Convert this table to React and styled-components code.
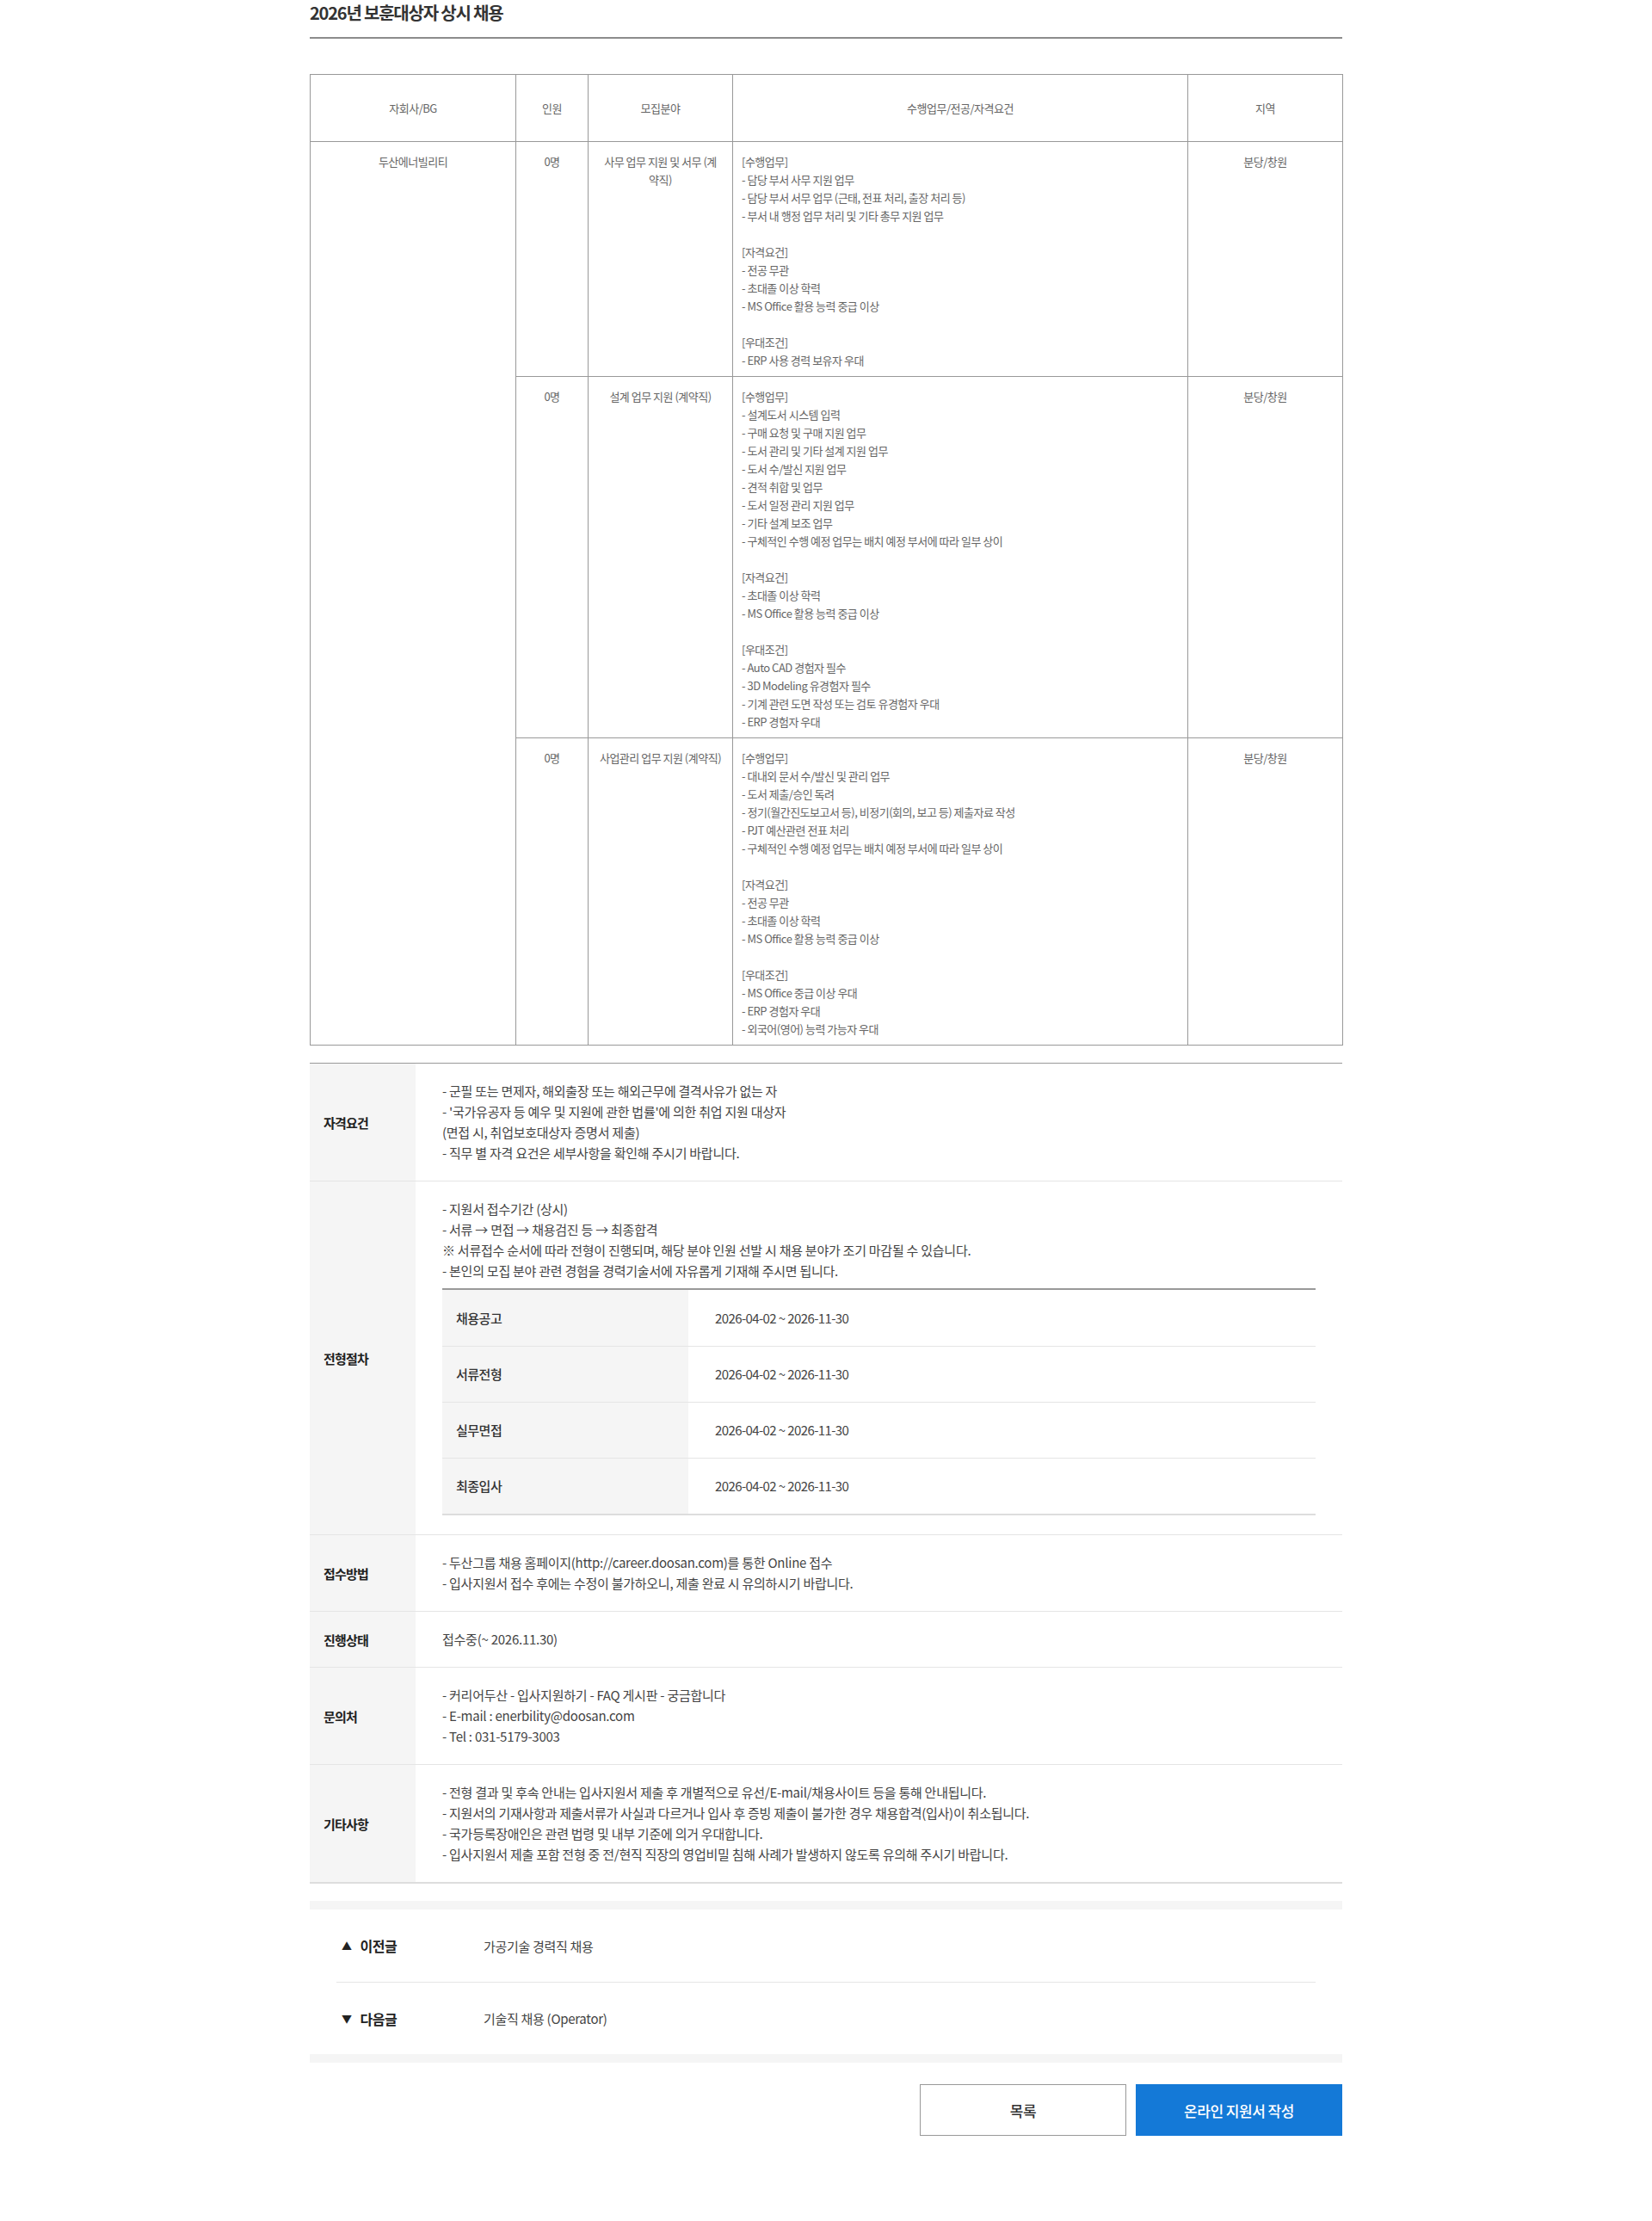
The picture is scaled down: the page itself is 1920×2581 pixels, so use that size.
import React from "react";
import styled, { createGlobalStyle } from "styled-components";

const GlobalStyle = createGlobalStyle`
  body {
    margin: 0;
    background: #fff;
    font-family: "Noto Sans CJK KR", "Noto Sans", sans-serif;
    color: #333;
  }
  * { box-sizing: border-box; }
`;

const Page = styled.div`
  width: 1200px;
  margin: 0 auto;
  padding-bottom: 100px;
`;

const Title = styled.h2`
  margin: 0;
  padding-bottom: 13px;
  font-size: 20px;
  line-height: 30px;
  font-weight: 700;
  letter-spacing: -1.2px;
  color: #333;
  border-bottom: 2px solid #8c8c8c;
`;

const JobTable = styled.table`
  width: 100%;
  margin-top: 41px;
  border-collapse: collapse;
  table-layout: fixed;
  font-size: 13px;
  line-height: 21px;
  letter-spacing: -0.5px;
  color: #666;
  th, td {
    border: 1px solid #999;
  }
`;

const Th = styled.th`
  height: 78px;
  font-weight: 400;
  text-align: center;
  vertical-align: middle;
`;

const Td = styled.td`
  padding: 12px 10px 8px;
  vertical-align: top;
  text-align: ${props => (props.$left ? "left" : "center")};
  white-space: pre-line;
`;

const InfoList = styled.dl`
  margin: 20px 0 0;
  border-top: 1px solid #999;
  border-bottom: 2px solid #ddd;
`;

const InfoRow = styled.div`
  display: flex;
  & + & {
    border-top: 1px solid #e5e5e5;
  }
`;

const InfoLabel = styled.dt`
  width: 123px;
  flex-shrink: 0;
  display: flex;
  align-items: center;
  padding-left: 16px;
  background: #f5f5f5;
  font-size: 15px;
  font-weight: 700;
  letter-spacing: -0.8px;
  color: #222;
`;

const InfoBody = styled.dd`
  flex: 1;
  margin: 0;
  padding: 20px 31px;
  font-size: 15px;
  line-height: 24px;
  letter-spacing: -0.25px;
  color: #444;
  white-space: pre-line;
`;

const StepTable = styled.div`
  margin: 8px 0 2px;
  border-top: 2px solid #999;
  border-bottom: 2px solid #ddd;
`;

const StepRow = styled.div`
  display: grid;
  grid-template-columns: 286px 1fr;
  height: 65px;
  & + & {
    border-top: 1px solid #e5e5e5;
  }
`;

const StepLabel = styled.div`
  display: flex;
  align-items: center;
  padding-left: 16px;
  background: #f5f5f5;
  font-size: 15px;
  font-weight: 500;
  letter-spacing: -0.5px;
  color: #333;
`;

const StepDate = styled.div`
  display: flex;
  align-items: center;
  padding-left: 31px;
  font-size: 15px;
  letter-spacing: -0.6px;
  color: #444;
`;

const Nav = styled.div`
  margin-top: 20px;
  padding: 0 31px;
  border-top: 10px solid #f5f5f5;
  border-bottom: 10px solid #f5f5f5;
`;

const NavRow = styled.div`
  display: flex;
  align-items: center;
  height: 84px;
  padding-left: 6px;
  & + & {
    border-top: 1px solid #e5e5e5;
  }
`;

const NavLabel = styled.span`
  display: flex;
  align-items: center;
  gap: 10px;
  width: 165px;
  font-size: 16px;
  font-weight: 700;
  letter-spacing: -0.5px;
  color: #222;
`;

const Arrow = styled.span`
  font-size: 12px;
  color: #222;
`;

const NavTitle = styled.span`
  font-size: 15px;
  letter-spacing: -0.3px;
  color: #444;
`;

const Buttons = styled.div`
  display: flex;
  justify-content: flex-end;
  gap: 11px;
  margin-top: 25px;
`;

const Button = styled.button`
  width: 240px;
  height: 60px;
  border: 1px solid ${props => (props.$primary ? "#1479d7" : "#999")};
  background: ${props => (props.$primary ? "#1479d7" : "#fff")};
  color: ${props => (props.$primary ? "#fff" : "#333")};
  font-family: inherit;
  font-size: 17px;
  font-weight: 500;
  letter-spacing: -0.5px;
  cursor: pointer;
`;

const jobs = [
  {
    count: "0명",
    field: "사무 업무 지원 및 서무 (계\n약직)",
    detail: `[수행업무]
- 담당 부서 사무 지원 업무
- 담당 부서 서무 업무 (근태, 전표 처리, 출장 처리 등)
- 부서 내 행정 업무 처리 및 기타 총무 지원 업무

[자격요건]
- 전공 무관
- 초대졸 이상 학력
- MS Office 활용 능력 중급 이상

[우대조건]
- ERP 사용 경력 보유자 우대`,
    area: "분당/창원"
  },
  {
    count: "0명",
    field: "설계 업무 지원 (계약직)",
    detail: `[수행업무]
- 설계도서 시스템 입력
- 구매 요청 및 구매 지원 업무
- 도서 관리 및 기타 설계 지원 업무
- 도서 수/발신 지원 업무
- 견적 취합 및 업무
- 도서 일정 관리 지원 업무
- 기타 설계 보조 업무
- 구체적인 수행 예정 업무는 배치 예정 부서에 따라 일부 상이

[자격요건]
- 초대졸 이상 학력
- MS Office 활용 능력 중급 이상

[우대조건]
- Auto CAD 경험자 필수
- 3D Modeling 유경험자 필수
- 기계 관련 도면 작성 또는 검토 유경험자 우대
- ERP 경험자 우대`,
    area: "분당/창원"
  },
  {
    count: "0명",
    field: "사업관리 업무 지원 (계약직)",
    detail: `[수행업무]
- 대내외 문서 수/발신 및 관리 업무
- 도서 제출/승인 독려
- 정기(월간진도보고서 등), 비정기(회의, 보고 등) 제출자료 작성
- PJT 예산관련 전표 처리
- 구체적인 수행 예정 업무는 배치 예정 부서에 따라 일부 상이

[자격요건]
- 전공 무관
- 초대졸 이상 학력
- MS Office 활용 능력 중급 이상

[우대조건]
- MS Office 중급 이상 우대
- ERP 경험자 우대
- 외국어(영어) 능력 가능자 우대`,
    area: "분당/창원"
  }
];

const steps = ["채용공고", "서류전형", "실무면접", "최종입사"];

export default function App() {
  return (
    <Page>
      <GlobalStyle />
      <Title>2026년 보훈대상자 상시 채용</Title>

      <JobTable>
        <colgroup>
          <col style={{ width: "239px" }} />
          <col style={{ width: "84px" }} />
          <col style={{ width: "168px" }} />
          <col style={{ width: "529px" }} />
          <col style={{ width: "180px" }} />
        </colgroup>
        <thead>
          <tr>
            <Th>자회사/BG</Th>
            <Th>인원</Th>
            <Th>모집분야</Th>
            <Th>수행업무/전공/자격요건</Th>
            <Th>지역</Th>
          </tr>
        </thead>
        <tbody>
          {jobs.map((job, i) => (
            <tr key={i}>
              {i === 0 && <Td rowSpan={jobs.length}>두산에너빌리티</Td>}
              <Td>{job.count}</Td>
              <Td>{job.field}</Td>
              <Td $left>{job.detail}</Td>
              <Td>{job.area}</Td>
            </tr>
          ))}
        </tbody>
      </JobTable>

      <InfoList>
        <InfoRow>
          <InfoLabel>자격요건</InfoLabel>
          <InfoBody>{`- 군필 또는 면제자, 해외출장 또는 해외근무에 결격사유가 없는 자
- '국가유공자 등 예우 및 지원에 관한 법률'에 의한 취업 지원 대상자
(면접 시, 취업보호대상자 증명서 제출)
- 직무 별 자격 요건은 세부사항을 확인해 주시기 바랍니다.`}</InfoBody>
        </InfoRow>
        <InfoRow>
          <InfoLabel>전형절차</InfoLabel>
          <InfoBody>
            {`- 지원서 접수기간 (상시)
- 서류 → 면접 → 채용검진 등 → 최종합격
※ 서류접수 순서에 따라 전형이 진행되며, 해당 분야 인원 선발 시 채용 분야가 조기 마감될 수 있습니다.
- 본인의 모집 분야 관련 경험을 경력기술서에 자유롭게 기재해 주시면 됩니다.`}
            <StepTable>
              {steps.map(step => (
                <StepRow key={step}>
                  <StepLabel>{step}</StepLabel>
                  <StepDate>2026-04-02 ~ 2026-11-30</StepDate>
                </StepRow>
              ))}
            </StepTable>
          </InfoBody>
        </InfoRow>
        <InfoRow>
          <InfoLabel>접수방법</InfoLabel>
          <InfoBody>{`- 두산그룹 채용 홈페이지(http://career.doosan.com)를 통한 Online 접수
- 입사지원서 접수 후에는 수정이 불가하오니, 제출 완료 시 유의하시기 바랍니다.`}</InfoBody>
        </InfoRow>
        <InfoRow>
          <InfoLabel>진행상태</InfoLabel>
          <InfoBody>접수중(~ 2026.11.30)</InfoBody>
        </InfoRow>
        <InfoRow>
          <InfoLabel>문의처</InfoLabel>
          <InfoBody>{`- 커리어두산 - 입사지원하기 - FAQ 게시판 - 궁금합니다
- E-mail : enerbility@doosan.com
- Tel : 031-5179-3003`}</InfoBody>
        </InfoRow>
        <InfoRow>
          <InfoLabel>기타사항</InfoLabel>
          <InfoBody>{`- 전형 결과 및 후속 안내는 입사지원서 제출 후 개별적으로 유선/E-mail/채용사이트 등을 통해 안내됩니다.
- 지원서의 기재사항과 제출서류가 사실과 다르거나 입사 후 증빙 제출이 불가한 경우 채용합격(입사)이 취소됩니다.
- 국가등록장애인은 관련 법령 및 내부 기준에 의거 우대합니다.
- 입사지원서 제출 포함 전형 중 전/현직 직장의 영업비밀 침해 사례가 발생하지 않도록 유의해 주시기 바랍니다.`}</InfoBody>
        </InfoRow>
      </InfoList>

      <Nav>
        <NavRow>
          <NavLabel><Arrow>▲</Arrow>이전글</NavLabel>
          <NavTitle>가공기술 경력직 채용</NavTitle>
        </NavRow>
        <NavRow>
          <NavLabel><Arrow>▼</Arrow>다음글</NavLabel>
          <NavTitle>기술직 채용 (Operator)</NavTitle>
        </NavRow>
      </Nav>

      <Buttons>
        <Button>목록</Button>
        <Button $primary>온라인 지원서 작성</Button>
      </Buttons>
    </Page>
  );
}
